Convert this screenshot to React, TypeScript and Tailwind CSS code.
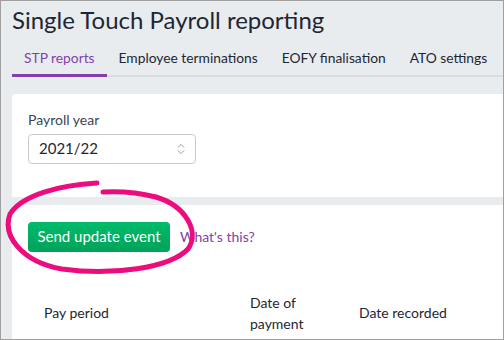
import { ChevronsUpDown } from "lucide-react";

const tabs = ["STP reports", "Employee terminations", "EOFY finalisation", "ATO settings"];

export default function App() {
  return (
    <div
      className="relative w-[504px] h-[340px] overflow-hidden border border-[#a0a0a0] bg-[#e9ecef] text-[#1c2530]"
      style={{ fontFamily: "Lato, 'Noto Sans', sans-serif" }}
    >
      <div className="pl-[11px]">
        <h1 className="whitespace-nowrap pt-[2px] text-[24px] leading-[34px] text-[#1d2733]">Single Touch Payroll reporting</h1>

        {/* tabs */}
        <div className="mt-[11px] flex whitespace-nowrap border-b-2 border-[#d9dde1] text-[13.8px]">
          {tabs.map((t, i) => (
            <div
              key={t}
              className={
                i === 0
                  ? "-mb-[2px] shrink-0 border-b-[3px] border-[#8241aa] px-[12px] pb-[5px] text-[#8241aa]"
                  : "shrink-0 px-[12px] pb-[6px] text-[#1d2733]"
              }
            >
              {t}
            </div>
          ))}
        </div>

        {/* payroll year card */}
        <div className="mt-[17px] h-[103px] rounded-tl-[4px] bg-white pl-[16px] pt-[16px]">
          <div className="text-[14px] leading-[20px] text-[#3a4654]">Payroll year</div>
          <div className="mt-[4px] flex h-[30px] w-[168px] items-center justify-between rounded-[4px] border border-[#c5cad0] pl-[10px] pr-[7px] text-[15px] text-[#1d2733]">
            <span>2021/22</span>
            <ChevronsUpDown className="h-[14px] w-[14px] text-[#8a929b]" strokeWidth={1.5} />
          </div>
        </div>

        {/* send update card */}
        <div className="mt-[8px] h-[200px] bg-white pl-[16px] pt-[17px]">
          <div className="flex items-center gap-[10px]">
            <button className="h-[30px] w-[142px] whitespace-nowrap rounded-[4px] bg-gradient-to-b from-[#00bb6a] to-[#00a25a] text-[15px] text-white">
              Send update event
            </button>
            <span className="text-[14px] text-[#8241aa]">What's this?</span>
          </div>

          <div className="mt-[40px] flex items-center text-[14px] leading-[21px] text-[#1d2733]">
            <div className="w-[222px] pl-[16px]">Pay period</div>
            <div className="w-[109px]">
              Date of
              <br />
              payment
            </div>
            <div className="whitespace-nowrap">Date recorded</div>
          </div>
        </div>
      </div>

      {/* hand-drawn highlight */}
      <svg className="pointer-events-none absolute left-[-1px] top-[-1px]" width="504" height="340" viewBox="0 0 504 340">
        <path
          d="M97,183 C60,185 22,195 10,214 C2,236 22,262 62,269 C112,276 170,268 188,249 C200,232 186,206 156,197 C136,192 118,191 103,192"
          fill="none"
          stroke="#ec0c7d"
          strokeWidth="5"
          strokeLinecap="round"
        />
      </svg>
    </div>
  );
}
